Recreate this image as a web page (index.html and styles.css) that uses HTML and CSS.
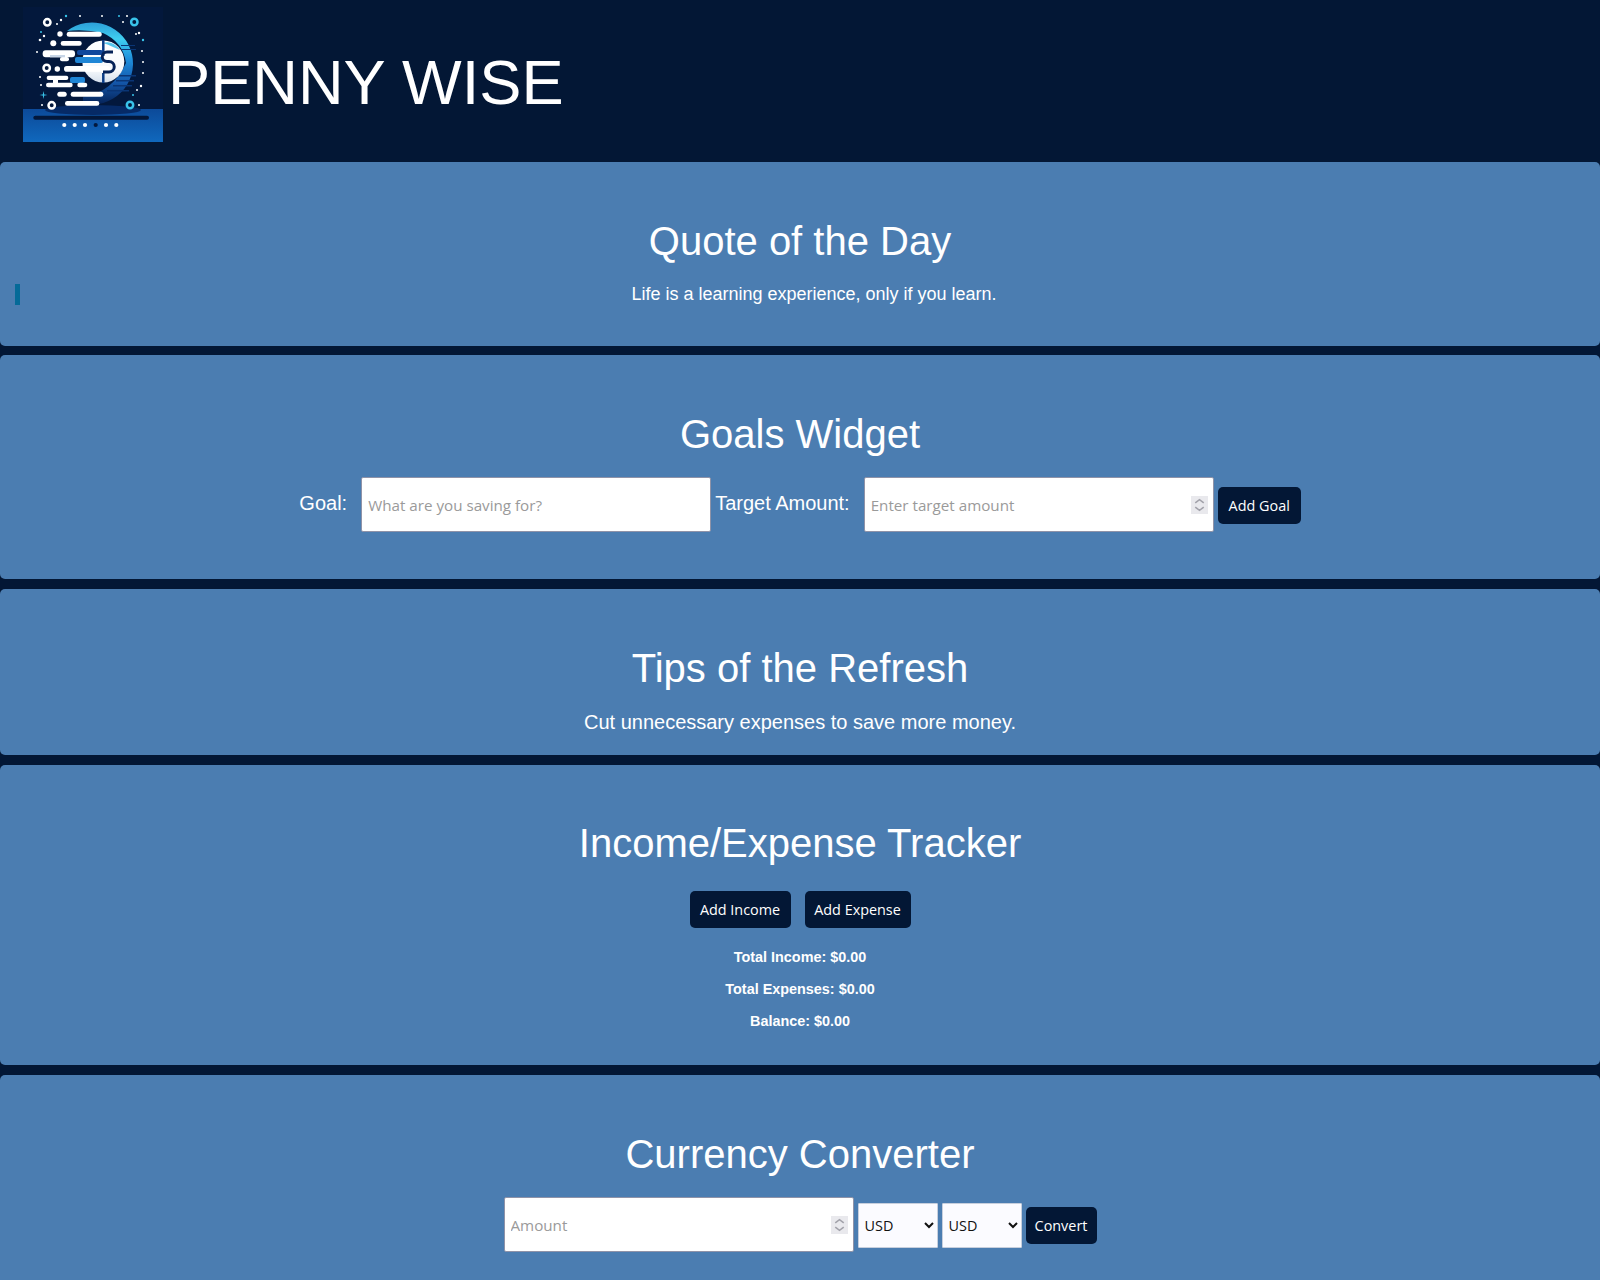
FILE: index.html
```html
<!DOCTYPE html>
<html lang="en">
<head>
<meta charset="utf-8">
<title>Penny Wise</title>
<link rel="stylesheet" href="styles.css">
</head>
<body>
<header class="site-header">
  <svg class="logo" viewBox="0 0 140 135" aria-label="Penny Wise logo">
    <defs>
      <linearGradient id="ring" x1="0" y1="0" x2="0" y2="1"><stop offset="0" stop-color="#2c9fd8"/><stop offset=".2" stop-color="#3fcdf0"/><stop offset=".45" stop-color="#1f8fdc"/><stop offset=".72" stop-color="#1459ad"/><stop offset="1" stop-color="#052257"/></linearGradient>
      <linearGradient id="base" x1="0" y1="0" x2="0" y2="1"><stop offset="0" stop-color="#0c4a99"/><stop offset="1" stop-color="#1068bd"/></linearGradient>
      <linearGradient id="coin" x1="0" y1="0" x2="0" y2="1"><stop offset="0" stop-color="#fff"/><stop offset=".7" stop-color="#f6f9fc"/><stop offset="1" stop-color="#d4dfec"/></linearGradient>
    </defs>
    <rect width="140" height="135" fill="#03183c"/>
    <rect y="102" width="140" height="33" fill="url(#base)"/>
    <ellipse cx="70" cy="103" rx="48" ry="5" fill="#062a66"/>
    <path d="M44 24 A41 41 0 1 1 60 96.500 L60 90 Q90 85 103 56 Q100 35 80 26 Q62 22 44 24Z" fill="url(#ring)"/>
    <g fill="#0a3575">
      <rect x="98" y="38" width="14" height="1"/>
      <rect x="98" y="42" width="15" height="1"/>
      <rect x="96" y="68" width="17" height="1.500"/>
      <rect x="93" y="73" width="18" height="1.500"/>
      <rect x="90" y="78" width="19" height="1.500"/>
      <rect x="84" y="83" width="22" height="1.500"/>
    </g>
    <circle cx="80.300" cy="54.500" r="21" fill="url(#coin)"/>
    <path d="M80 36 Q90 33 97 43 L90 40 Q84 37 80 36Z" fill="#55c7ee"/>
    <g fill="#10479c"><rect x="54" y="43" width="26" height="5" rx="2"/></g>
    <g fill="#1f86d6"><rect x="52" y="50" width="28" height="6" rx="2"/><rect x="47" y="70" width="15" height="6" rx="2"/></g>
    <g fill="#fff">
      <rect x="43.700" y="24.700" width="35" height="5" rx="2.500"/>
      <rect x="37.700" y="34" width="21" height="4.700" rx="2.300"/>
      <rect x="19.700" y="43.300" width="32.300" height="7" rx="3"/>
      <rect x="37" y="50" width="9" height="4.300" rx="2"/>
      <rect x="41" y="59" width="46" height="5.700" rx="2.800"/>
      <rect x="23.700" y="68.700" width="21.600" height="4.300" rx="2"/>
      <rect x="30" y="72" width="5" height="5"/>
      <rect x="23" y="75.700" width="26.700" height="4.600" rx="2.300"/>
      <rect x="54.300" y="75.700" width="10" height="4.600" rx="2.300"/>
      <rect x="34.300" y="84.700" width="9.400" height="5" rx="2.500"/>
      <rect x="47.700" y="84.700" width="32.600" height="5" rx="2.500"/>
      <rect x="42" y="94" width="34.300" height="4.700" rx="2.300"/>
      <circle cx="37" cy="27" r="2.700"/><circle cx="30.300" cy="36.300" r="3"/><circle cx="34.300" cy="62" r="2.700"/>
    </g>
    <rect x="27" y="48" width="15" height="2.300" fill="#c7d5e6"/>
    <path d="M80.300 33 V49 M80.300 66 V76" stroke="#0a3c86" stroke-width="2.500" fill="none"/>
    <path d="M90 45 H84 A4.500 4.500 0 0 0 84 54.500 H86 A5 5 0 0 1 86 65 H80" stroke="#052257" stroke-width="3" fill="none"/>
    <g fill="none" stroke="#fff" stroke-width="2.500">
      <circle cx="24.300" cy="15.300" r="3.200"/><circle cx="23.700" cy="61" r="3.200"/><circle cx="28.700" cy="98.300" r="3.200"/>
    </g>
    <g fill="none" stroke="#39c3ea" stroke-width="2.500">
      <circle cx="111.300" cy="15" r="3.200"/><circle cx="107" cy="98" r="3.200"/>
    </g>
    <g fill="#fff">
      <circle cx="34" cy="17" r="1"/><circle cx="38" cy="13" r="1.200"/><circle cx="57" cy="9" r="1"/><circle cx="79" cy="9" r="1"/><circle cx="104" cy="9" r="1"/><circle cx="100" cy="15" r="1"/>
      <circle cx="116" cy="26" r="1.200"/><circle cx="113" cy="27" r="1"/><circle cx="119" cy="44" r="1"/><circle cx="120" cy="55" r="1"/><circle cx="120" cy="66" r="1"/><circle cx="118" cy="79" r="1.200"/><circle cx="114" cy="83" r="1"/>
      <circle cx="14" cy="45" r="1"/><circle cx="17" cy="33" r="1.300"/><circle cx="21" cy="29" r="1.200"/><circle cx="17" cy="70" r="1"/><circle cx="18" cy="78" r="1"/><circle cx="19" cy="98" r="1"/><circle cx="116" cy="98" r="1"/>
    </g>
    <g fill="#39c3ea"><circle cx="43" cy="9" r="1.200"/><circle cx="96" cy="9" r="1"/><circle cx="120" cy="33" r="1.200"/><circle cx="18" cy="25" r="1"/><circle cx="110" cy="88" r="1"/><path d="M20.500 84 L21.300 88 L20.500 92 L19.700 88Z M16.500 88 L20.500 87.200 L24.500 88 L20.500 88.800Z"/></g>
    <rect x="10.300" y="108.700" width="115.700" height="4" rx="2" fill="#03183c"/>
    <g fill="#fff"><circle cx="41.300" cy="118" r="2.100"/><circle cx="51.700" cy="118" r="2.100"/><circle cx="62" cy="118" r="2.100"/><circle cx="83" cy="118" r="2.100"/><circle cx="93.300" cy="118" r="2.100"/></g>
    <circle cx="72.700" cy="118" r="2.100" fill="#03183c"/>
  </svg>
  <h1 class="brand">PENNY WISE</h1>
</header>
<main class="stack">
  <section class="card card-quote">
    <h2>Quote of the Day</h2>
    <div class="quote-row">
      <span class="cursor"></span>
      <p class="quote">Life is a learning experience, only if you learn.</p>
    </div>
  </section>
  <section class="card card-form">
    <h2>Goals Widget</h2>
    <form class="inline-form">
      <label class="field-label">Goal:</label>
      <input class="field" type="text" placeholder="What are you saving for?">
      <label class="field-label">Target Amount:</label>
      <span class="number-wrap"><input class="field" type="text" placeholder="Enter target amount"><span class="spin"><svg viewBox="0 0 16 16"><path d="M4 6 L8 3 L12 6 M4 10 L8 13 L12 10" fill="none" stroke="#a2a2aa" stroke-width="1.500"/></svg></span></span>
      <button class="btn btn-goal" type="button">Add Goal</button>
    </form>
  </section>
  <section class="card card-tip">
    <h2>Tips of the Refresh</h2>
    <p class="tip">Cut unnecessary expenses to save more money.</p>
  </section>
  <section class="card card-tracker">
    <h2>Income/Expense Tracker</h2>
    <div class="btn-row">
      <button class="btn btn-income" type="button">Add Income</button>
      <button class="btn btn-expense" type="button">Add Expense</button>
    </div>
    <p class="stat">Total Income: $0.00</p>
    <p class="stat">Total Expenses: $0.00</p>
    <p class="stat">Balance: $0.00</p>
  </section>
  <section class="card card-form">
    <h2>Currency Converter</h2>
    <form class="inline-form">
      <span class="number-wrap"><input class="field" type="text" placeholder="Amount"><span class="spin"><svg viewBox="0 0 16 16"><path d="M4 6 L8 3 L12 6 M4 10 L8 13 L12 10" fill="none" stroke="#a2a2aa" stroke-width="1.500"/></svg></span></span>
      <select class="pick"><option>USD</option></select>
      <select class="pick"><option>USD</option></select>
      <button class="btn btn-convert" type="button">Convert</button>
    </form>
  </section>
</main>
</body>
</html>
```
FILE: styles.css
```css
* { box-sizing: border-box; }
html, body { margin: 0; height: 1280px; overflow: hidden; }
body { background: #031735; color: #fff; font-family: "Liberation Sans", Arial, sans-serif; }
.site-header { height: 162px; display: flex; align-items: flex-start; padding: 7px 0 0 23px; gap: 5px; }
.logo { width: 140px; height: 135px; display: block; flex: none; }
.brand { margin: 38px 0 0; font-size: 63.200px; line-height: 74px; font-weight: 400; }
.stack { display: flex; flex-direction: column; gap: 10px; }
.card { background: #4b7db1; border-radius: 5px; text-align: center; padding: 55px 20px 38px; }
.card h2 { margin: 0; font-size: 40px; line-height: 48px; font-weight: 400; }
.card-quote { margin-bottom: -1px; }
.card-form { padding-bottom: 47px; }
.card-tip { padding-bottom: 18px; }
.card-tracker { padding-bottom: 33px; }
.card-tracker h2 { margin-top: -1px; }
.quote-row { position: relative; margin-top: 16px; }
.cursor { position: absolute; left: -5px; top: 3px; width: 5px; height: 21px; background: #056a98; }
.quote { margin: 0; font-size: 18px; line-height: 27px; padding-left: 28px; }
.tip { margin: 15px 0 0; font-size: 20px; line-height: 30px; }
.inline-form { display: flex; justify-content: center; align-items: center; gap: 4px; margin-top: 19px; }
.inline-form .btn, .inline-form .pick { margin-top: 2px; }
.field-label { font-size: 20px; line-height: 30px; margin-right: 10px; padding-bottom: 4px; }
.field { width: 350px; height: 55px; padding: 6px; background: #fff; border: 1px solid #8f93a8; border-radius: 2px; font: 15.200px "Open Sans", "Noto Sans", sans-serif; color: #222; }
.field::placeholder { color: #9a9a9a; opacity: 1; }
.number-wrap { position: relative; display: block; }
.spin { position: absolute; right: 6px; top: 19px; width: 17px; height: 18px; background: #e9e9ed; display: flex; }
.spin svg { width: 100%; height: 100%; }
.btn { height: 37px; padding: 0; background: #031735; color: #fff; border: 0; border-radius: 5px; font: 14.400px "Open Sans", "Noto Sans", sans-serif; }
.btn-goal { width: 83px; }
.btn-income { width: 101px; }
.btn-expense { width: 106px; }
.btn-convert { width: 71px; }
.btn-row { display: flex; justify-content: center; gap: 14px; margin-top: 24px; }
.stat { margin: 0; font-size: 14.400px; line-height: 22px; font-weight: 700; margin-top: 10px; }
.btn-row + .stat { margin-top: 18px; }
.pick { width: 80px; height: 45px; padding: 0 2px; background: #fbfbff; color: #111; border: 1px solid #c7cfdd; border-radius: 1px; font: 14.400px "Open Sans", "Noto Sans", sans-serif; }
```
